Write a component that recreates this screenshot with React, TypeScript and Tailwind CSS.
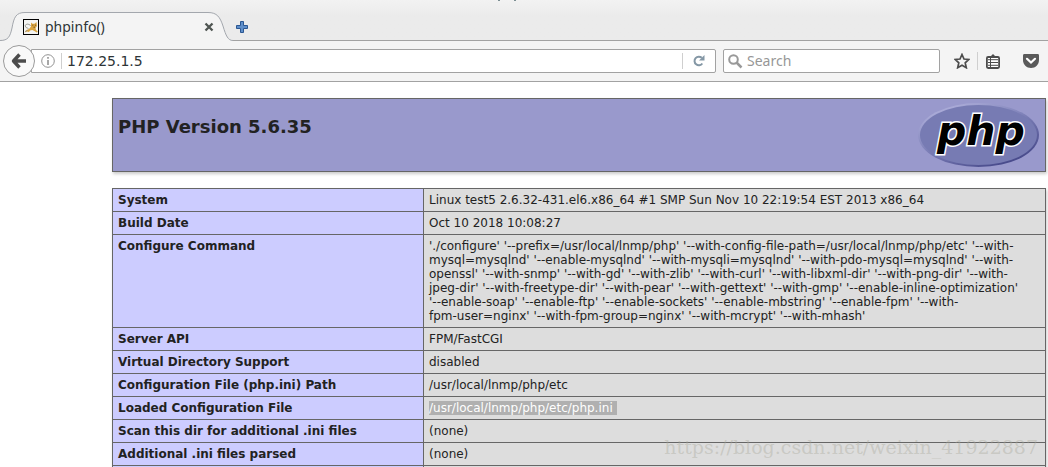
import React from "react";
import type { ReactNode } from "react";

interface InfoRow {
  name: string;
  value: ReactNode;
}

const configureLines = [
  "'./configure' '--prefix=/usr/local/lnmp/php' '--with-config-file-path=/usr/local/lnmp/php/etc' '--with-",
  "mysql=mysqlnd' '--enable-mysqlnd' '--with-mysqli=mysqlnd' '--with-pdo-mysql=mysqlnd' '--with-",
  "openssl' '--with-snmp' '--with-gd' '--with-zlib' '--with-curl' '--with-libxml-dir' '--with-png-dir' '--with-",
  "jpeg-dir' '--with-freetype-dir' '--with-pear' '--with-gettext' '--with-gmp' '--enable-inline-optimization'",
  "'--enable-soap' '--enable-ftp' '--enable-sockets' '--enable-mbstring' '--enable-fpm' '--with-",
  "fpm-user=nginx' '--with-fpm-group=nginx' '--with-mcrypt' '--with-mhash'",
];

const rows: InfoRow[] = [
  {
    name: "System",
    value: "Linux test5 2.6.32-431.el6.x86_64 #1 SMP Sun Nov 10 22:19:54 EST 2013 x86_64",
  },
  { name: "Build Date", value: "Oct 10 2018 10:08:27" },
  {
    name: "Configure Command",
    value: configureLines.map((line) => (
      <React.Fragment key={line}>
        {line}
        <br />
      </React.Fragment>
    )),
  },
  { name: "Server API", value: "FPM/FastCGI" },
  { name: "Virtual Directory Support", value: "disabled" },
  { name: "Configuration File (php.ini) Path", value: "/usr/local/lnmp/php/etc" },
  {
    name: "Loaded Configuration File",
    value: (
      <span className="bg-[#b0b0b0] pr-1 text-white">/usr/local/lnmp/php/etc/php.ini</span>
    ),
  },
  { name: "Scan this dir for additional .ini files", value: "(none)" },
  { name: "Additional .ini files parsed", value: "(none)" },
];

const Favicon = () => (
  <svg width="16" height="16" viewBox="0 0 16 16" aria-hidden="true">
    <rect x="0.5" y="0.5" width="15" height="15" fill="#f4f4f2" stroke="#000" />
    <path d="M1.500 13.500 3.500 11 6 10l2-2.500V3.500l1.500 1.200h2L13.500 3l.5 4-1.500 2 .5 2 1.800 1.500-1 1-2.500-1.500-2-1-2.300.500L6 13l-2-.500z" fill="#d9a441" />
    <path d="M5.500 9.500 3 8.500 2 6.500 4 5l2.500.5L7.500 7M2 12.500l2.500-1" fill="none" stroke="#8b8b84" strokeWidth="0.8" />
    <path d="M9.300 6.200h1M12 6.200h1M10.500 8.200h1.500" stroke="#604318" strokeWidth="0.8" />
  </svg>
);

const BackIcon = () => (
  <svg width="16" height="16" viewBox="0 0 16 16" aria-hidden="true">
    <path d="M8.500 1.500 2.500 8l6 6.500M3 8h12" fill="none" stroke="#4c4c4c" strokeWidth="3.400" strokeLinejoin="round" />
  </svg>
);

const PhpLogo = () => (
  <svg width="122" height="64" viewBox="0 0 122 64" role="img" aria-label="PHP logo">
    <defs>
      <linearGradient id="rim" x1="0.15" y1="0" x2="0.85" y2="1">
        <stop offset="0" stopColor="#b5b5df" />
        <stop offset="0.45" stopColor="#7f82b9" />
        <stop offset="1" stopColor="#3d3f82" />
      </linearGradient>
    </defs>
    <ellipse cx="60.500" cy="32" rx="60.500" ry="32" fill="url(#rim)" />
    <ellipse cx="60.500" cy="32" rx="58.500" ry="30" fill="#777bb3" />
    <text
      x="19"
      y="42"
      className="fill-black stroke-white stroke-3 font-['DejaVu_Sans',sans-serif] text-[41px] font-bold italic [paint-order:stroke]"
    >
      php
    </text>
  </svg>
);

const TabStrip = () => (
  <div className="relative flex h-10 items-end bg-linear-to-b from-[#f2f2f2] to-[#ebebeb] to-40%">
    {/* descenders of the window title */}
    <svg className="absolute top-0 left-[47.5%]" width="18" height="1" viewBox="0 0 18 1" aria-hidden="true">
      <path d="M0 0h2v1H0zM16 0h2v1h-2z" fill="#7c8f93" />
    </svg>
    <div className="relative -mb-px flex h-[29px] w-[233px] items-center pr-[19px] pl-[23px]">
      <svg className="absolute inset-0" width="233" height="29" viewBox="0 0 233 29" aria-hidden="true">
        <path
          d="M0 28.500C8 28.500 10 25 12 16 14 5 16 .5 25 .5H208C217 .5 220 5 223 14 226 24 228 28.500 233 28.500V29H0z"
          fill="#f4f4f4"
        />
        <path
          d="M0 28.500C8 28.500 10 25 12 16 14 5 16 .5 25 .5H208C217 .5 220 5 223 14 226 24 228 28.500 233 28.500"
          fill="none"
          stroke="#a3a7ad"
        />
      </svg>
      <div className="relative flex grow items-center gap-1.5">
        <Favicon />
        <span className="grow text-sm">phpinfo()</span>
        <button type="button" aria-label="Close tab" className="flex">
          <svg width="10" height="10" viewBox="0 0 10 10" aria-hidden="true">
            <path d="M1.500 1.500l7 7M8.500 1.500l-7 7" stroke="#4f5552" strokeWidth="2.300" />
          </svg>
        </button>
      </div>
    </div>
    <button type="button" aria-label="New tab" className="mb-[7px] ml-[3px] flex">
      <svg width="12" height="12" viewBox="0 0 12 12" aria-hidden="true">
        <path d="M4.500.5h3v4h4v3h-4v4h-3v-4h-4v-3h4z" fill="#5f8fca" stroke="#2b5792" strokeLinejoin="round" />
      </svg>
    </button>
  </div>
);

const Toolbar = () => (
  <div className="flex h-[42px] items-center border-y border-[#a2a2a2] bg-[#f4f4f4] pr-[9px] pl-[3px]">
    <button
      type="button"
      aria-label="Back"
      className="z-10 flex size-8 shrink-0 items-center justify-center rounded-full border border-[#9b9b9b] bg-[#f9f9f9]"
    >
      <BackIcon />
    </button>
    <div className="-ml-1 flex h-6 grow items-center rounded-r-xs border border-[#a2a2a2] bg-white pl-[9px]">
      <svg width="14" height="14" viewBox="0 0 14 14" className="shrink-0" aria-hidden="true">
        <circle cx="7" cy="7" r="6.300" fill="none" stroke="#929292" />
        <path d="M7 3v1.800M7 6v5" stroke="#8a8a8a" strokeWidth="1.500" />
      </svg>
      <input
        type="text"
        aria-label="Address"
        defaultValue="172.25.1.5"
        className="ml-1.5 h-4 min-w-0 grow border-x border-[#cfcfcf] pl-[5px] font-['DejaVu_Sans',sans-serif] text-sm outline-none"
      />
      <button type="button" aria-label="Reload" className="flex w-8 justify-center">
        <svg width="12" height="12" viewBox="0 0 12 12" aria-hidden="true">
          <path d="M9.300 8.500A4.300 4.300 0 1 1 8.800 2.800" fill="none" stroke="#8497a5" strokeWidth="2" />
          <path d="M11.500 0v5.500H6z" fill="#8497a5" />
        </svg>
      </button>
    </div>
    <div className="ml-[7px] flex h-6 w-[217px] shrink-0 items-center rounded-xs border border-[#a2a2a2] bg-white pl-1">
      <svg width="15" height="15" viewBox="0 0 15 15" className="shrink-0" aria-hidden="true">
        <circle cx="5.500" cy="5.500" r="4.300" fill="none" stroke="#999" strokeWidth="2" />
        <path d="M8.500 8.500 13.500 13.500" stroke="#999" strokeWidth="2.500" />
      </svg>
      <input
        type="search"
        aria-label="Search"
        placeholder="Search"
        className="ml-1 min-w-0 grow text-sm outline-none placeholder:text-[#979797]"
      />
    </div>
    <button type="button" aria-label="Bookmark this page" className="ml-3.5 flex">
      <svg width="16" height="16" viewBox="0 0 16 16" aria-hidden="true">
        <path d="M8 1.500 10 6l4.800.5-3.600 3.300 1.100 4.900L8 12.200l-4.300 2.500 1.100-4.900L1.200 6.500 6 6z" fill="none" stroke="#4c4c4c" strokeWidth="1.700" />
      </svg>
    </button>
    <span className="ml-[7px] h-[18px] w-px bg-[#cfcfcf]" />
    <button type="button" aria-label="Show bookmarks" className="ml-2 flex">
      <svg width="14" height="15" viewBox="0 0 14 15" aria-hidden="true">
        <path d="M4 3 7 0l3 3z" fill="#4c4c4c" />
        <rect x="0.900" y="3" width="12.200" height="11" rx="1.200" fill="#fff" stroke="#4c4c4c" strokeWidth="1.800" />
        <path d="M2 5.700h10M2 8.500h10M2 11.300h10M4.500 4v9" stroke="#4c4c4c" />
      </svg>
    </button>
    <button type="button" aria-label="Save to Pocket" className="ml-[23px] flex">
      <svg width="16" height="14" viewBox="0 0 16 14" aria-hidden="true">
        <path d="M1.500 0h13C15.500 0 16 .5 16 1.500V6c0 4.500-3.500 8-8 8S0 10.500 0 6V1.500C0 .5.500 0 1.500 0z" fill="#5a5a5a" />
        <path d="M4 4.800 8 8.600 12 4.800" fill="none" stroke="#fff" strokeWidth="2.200" strokeLinecap="round" />
      </svg>
    </button>
  </div>
);

const InfoTable = () => (
  <table className="w-full border-collapse text-left text-xs/[14px] shadow-[1px_2px_3px_#ccc]">
    <tbody>
      {rows.map((row) => (
        <tr key={row.name}>
          <th scope="row" className="w-[311px] border border-[#666] bg-[#ccccff] px-[5px] py-1 align-top font-bold">
            {row.name}
          </th>
          <td className="border border-[#666] bg-[#ddd] px-[5px] py-1 align-top">{row.value}</td>
        </tr>
      ))}
      <tr>
        <td className="border border-[#666] bg-[#ccccff] py-1" />
        <td className="border border-[#666] bg-[#ddd] py-1" />
      </tr>
    </tbody>
  </table>
);

export default function App() {
  return (
    <div className="relative h-screen overflow-hidden bg-white font-['DejaVu_Sans',sans-serif] text-[#222]">
      <header className="font-['Noto_Sans','Open_Sans',sans-serif] text-[#2e3436]">
        <TabStrip />
        <Toolbar />
      </header>

      <main className="flex flex-col gap-4 pt-4 pr-0.5 pl-28">
        {/* version banner */}
        <div className="flex items-start justify-between border border-[#666] bg-[#9999cc] px-[5px] py-1 shadow-[1px_2px_3px_#ccc]">
          <h1 className="mt-3 text-lg/6 font-bold">PHP Version 5.6.35</h1>
          <PhpLogo />
        </div>
        <InfoTable />
      </main>

      {/* watermark */}
      <p className="absolute right-2.5 bottom-1 font-['DejaVu_Serif',serif] text-[19px]/8 text-[#a8a89c]/40">
        https://blog.csdn.net/weixin_41922887
      </p>
    </div>
  );
}
